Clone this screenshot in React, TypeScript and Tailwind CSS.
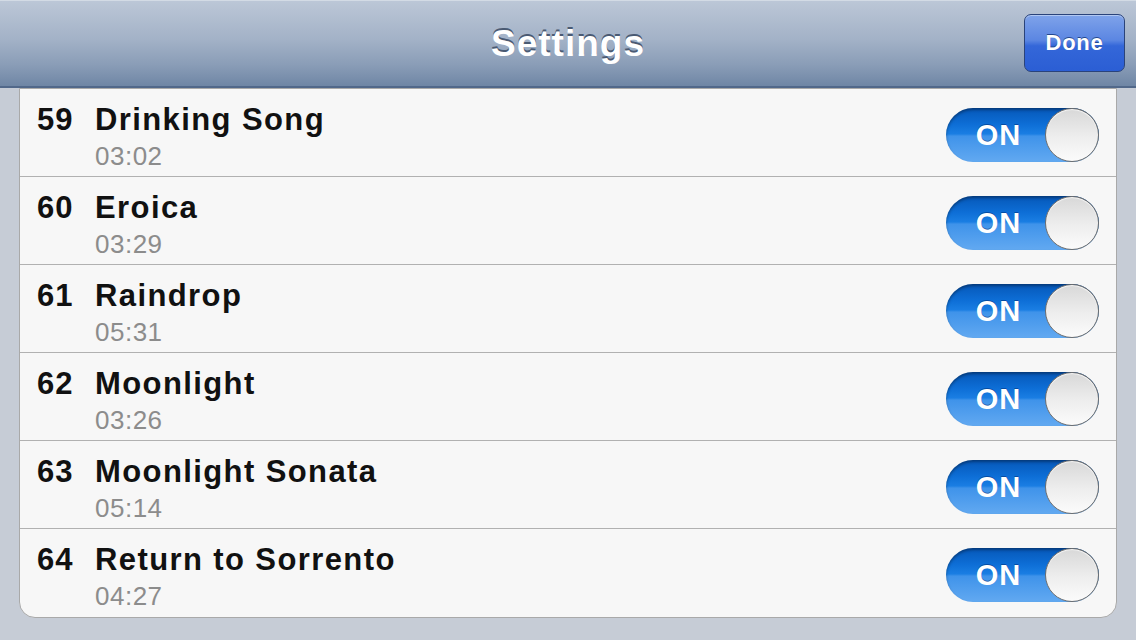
const songs = [
  { no: 59, title: "Drinking Song", time: "03:02" },
  { no: 60, title: "Eroica", time: "03:29" },
  { no: 61, title: "Raindrop", time: "05:31" },
  { no: 62, title: "Moonlight", time: "03:26" },
  { no: 63, title: "Moonlight Sonata", time: "05:14" },
  { no: 64, title: "Return to Sorrento", time: "04:27" },
];

function Toggle() {
  return (
    <div className="flex h-[54px] w-[153px] items-center rounded-full bg-[linear-gradient(to_bottom,#0657b8_0%,#0d6ed6_30%,#1a7ee3_48%,#3f93ea_52%,#62a9f1_100%)] shadow-[inset_0_2px_3px_rgba(0,0,0,0.35)]">
      <span className="flex-1 pl-[6px] text-center text-[29px] font-bold leading-none tracking-[1px] text-white [text-shadow:0_-1px_0_rgba(0,40,110,0.5)]">
        ON
      </span>
      <div className="h-[54px] w-[54px] rounded-full border border-[#6f6f6f] bg-[linear-gradient(to_bottom,#d8d8d8,#eeeeee_55%,#fbfbfb)] shadow-[inset_0_1px_1px_rgba(255,255,255,0.8)]" />
    </div>
  );
}

export default function App() {
  return (
    <div className="flex h-[640px] w-[1136px] flex-col overflow-hidden bg-[#c6ccd6] font-['Liberation_Sans',Arial,sans-serif]">
      <div className="flex h-[88px] shrink-0 items-center border-b-2 border-[#51688a] border-t border-t-[#d3dbe5] bg-[linear-gradient(to_bottom,#bcc7d7,#a3b2c7_45%,#8a9db7_75%,#6f86a5)] px-[11px]">
        <div className="w-[101px]" />
        <h1 className="flex-1 text-center text-[37px] font-bold leading-none tracking-[1px] text-white [text-shadow:0_-2px_0_#4a5a73]">
          Settings
        </h1>
        <button className="mt-[-2px] h-[58px] w-[101px] rounded-[7px] border border-[#2a437a] bg-[linear-gradient(to_bottom,#7fa3ea,#5b86e2_45%,#3467d9_55%,#2b5ed4)] text-[22px] font-bold tracking-[0.75px] text-white shadow-[inset_0_1px_0_rgba(255,255,255,0.4)] [text-shadow:0_-1px_0_#23478f]">
          Done
        </button>
      </div>
      <div className="mx-[19px] overflow-hidden rounded-b-[16px] border border-t border-[#a9a9a9] bg-[#f7f7f7]">
        {songs.map((s, i) => (
          <div
            key={s.no}
            className={`flex h-[88px] items-start ${i < songs.length - 1 ? "border-b border-[#b1b1b1]" : ""}`}
          >
            <div className="w-[75px] shrink-0 pl-[17px] pt-[14px] text-[31px] font-bold leading-[34px] tracking-[1px] text-[#111]">
              {s.no}
            </div>
            <div className="flex-1 pt-[14px]">
              <div className="text-[31px] font-bold leading-[34px] tracking-[1.4px] text-[#111]">{s.title}</div>
              <div className="mt-[4px] text-[26px] leading-[30px] tracking-[0.5px] text-[#8c8c8c]">{s.time}</div>
            </div>
            <div className="shrink-0 pr-[17px] pt-[19px]">
              <Toggle />
            </div>
          </div>
        ))}
      </div>
    </div>
  );
}
